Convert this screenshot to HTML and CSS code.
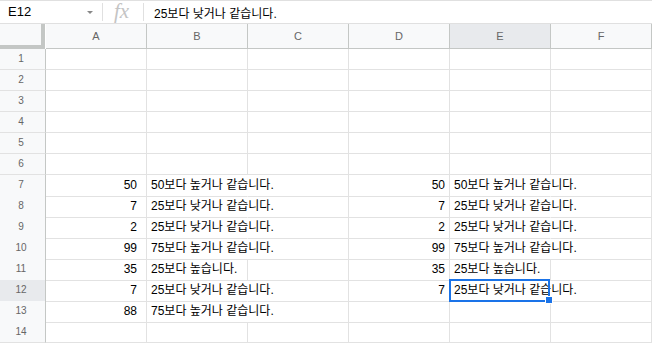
FILE: index.html
```html
<!DOCTYPE html>
<html lang="ko">
<head>
    <meta charset="UTF-8">
    <title>Sheet</title>
    <link rel="stylesheet" href="styles.css">
</head>
<body>

<div class="formula-bar">
    <div class="name-box">E12<span class="caret"></span></div>
    <div class="fx">fx</div>
    <div class="formula">25보다 낮거나 같습니다.</div>
</div>

<div class="sheet">
    <div class="row head-row">
        <div class="corner"></div>
        <div class="col-head">A</div>
        <div class="col-head">B</div>
        <div class="col-head">C</div>
        <div class="col-head">D</div>
        <div class="col-head current">E</div>
        <div class="col-head">F</div>
    </div>

    <div class="row"><div class="row-head">1</div><div class="cell"></div><div class="cell"></div><div class="cell"></div><div class="cell"></div><div class="cell"></div><div class="cell"></div></div>
    <div class="row"><div class="row-head">2</div><div class="cell"></div><div class="cell"></div><div class="cell"></div><div class="cell"></div><div class="cell"></div><div class="cell"></div></div>
    <div class="row"><div class="row-head">3</div><div class="cell"></div><div class="cell"></div><div class="cell"></div><div class="cell"></div><div class="cell"></div><div class="cell"></div></div>
    <div class="row"><div class="row-head">4</div><div class="cell"></div><div class="cell"></div><div class="cell"></div><div class="cell"></div><div class="cell"></div><div class="cell"></div></div>
    <div class="row"><div class="row-head">5</div><div class="cell"></div><div class="cell"></div><div class="cell"></div><div class="cell"></div><div class="cell"></div><div class="cell"></div></div>
    <div class="row"><div class="row-head">6</div><div class="cell"></div><div class="cell"></div><div class="cell"></div><div class="cell"></div><div class="cell"></div><div class="cell"></div></div>

    <div class="row">
        <div class="row-head">7</div>
        <div class="cell num col-a">50</div>
        <div class="cell text spill">50보다 높거나 같습니다.</div>
        <div class="cell"></div>
        <div class="cell num">50</div>
        <div class="cell text spill">50보다 높거나 같습니다.</div>
        <div class="cell"></div>
    </div>
    <div class="row">
        <div class="row-head">8</div>
        <div class="cell num col-a">7</div>
        <div class="cell text spill">25보다 낮거나 같습니다.</div>
        <div class="cell"></div>
        <div class="cell num">7</div>
        <div class="cell text spill">25보다 낮거나 같습니다.</div>
        <div class="cell"></div>
    </div>
    <div class="row">
        <div class="row-head">9</div>
        <div class="cell num col-a">2</div>
        <div class="cell text spill">25보다 낮거나 같습니다.</div>
        <div class="cell"></div>
        <div class="cell num">2</div>
        <div class="cell text spill">25보다 낮거나 같습니다.</div>
        <div class="cell"></div>
    </div>
    <div class="row">
        <div class="row-head">10</div>
        <div class="cell num col-a">99</div>
        <div class="cell text spill">75보다 높거나 같습니다.</div>
        <div class="cell"></div>
        <div class="cell num">99</div>
        <div class="cell text spill">75보다 높거나 같습니다.</div>
        <div class="cell"></div>
    </div>
    <div class="row">
        <div class="row-head">11</div>
        <div class="cell num col-a">35</div>
        <div class="cell text">25보다 높습니다.</div>
        <div class="cell"></div>
        <div class="cell num">35</div>
        <div class="cell text">25보다 높습니다.</div>
        <div class="cell"></div>
    </div>
    <div class="row">
        <div class="row-head current">12</div>
        <div class="cell num col-a">7</div>
        <div class="cell text spill">25보다 낮거나 같습니다.</div>
        <div class="cell"></div>
        <div class="cell num">7</div>
        <div class="cell text spill active">25보다 낮거나 같습니다.</div>
        <div class="cell"></div>
    </div>
    <div class="row">
        <div class="row-head">13</div>
        <div class="cell num col-a">88</div>
        <div class="cell text spill">75보다 높거나 같습니다.</div>
        <div class="cell"></div>
        <div class="cell"></div>
        <div class="cell"></div>
        <div class="cell"></div>
    </div>
    <div class="row"><div class="row-head">14</div><div class="cell"></div><div class="cell"></div><div class="cell"></div><div class="cell"></div><div class="cell"></div><div class="cell"></div></div>
</div>

</body>
</html>
```

FILE: styles.css
```css
body {
    margin: 0;
    font-family: 'Liberation Sans', 'Noto Sans CJK KR', sans-serif;
    background-color: #fff;
    color: #000;
    overflow: hidden;
}

/* Formula bar */
.formula-bar {
    display: flex;
    align-items: center;
    height: 24px;
    box-sizing: border-box;
    border-top: 1px solid #e0e0e0;
    border-bottom: 1px solid #e0e0e0;
}

.name-box {
    position: relative;
    width: 103px;
    box-sizing: border-box;
    padding-left: 8px;
    font-size: 13px;
    border-right: 1px solid #e0e0e0;
    height: 18px;
    line-height: 18px;
}

.caret {
    position: absolute;
    right: 9px;
    top: 8px;
    width: 0;
    height: 0;
    border-left: 3px solid transparent;
    border-right: 3px solid transparent;
    border-top: 3px solid #888;
}

.fx {
    width: 41px;
    box-sizing: border-box;
    padding-left: 11px;
    height: 18px;
    line-height: 16px;
    border-right: 1px solid #e0e0e0;
    font-family: 'Liberation Serif', serif;
    font-style: italic;
    font-size: 21px;
    color: #c4c4c4;
}

.formula {
    padding-left: 10px;
    font-size: 12px;
}

/* Grid */
.row {
    display: grid;
    grid-template-columns: 46px repeat(5, 101px) 1fr;
    height: 21px;
}

.head-row {
    height: 25px;
}

.corner {
    background-color: #f8f9fa;
    border-right: 4px solid #c4c7c5;
    border-bottom: 4px solid #c4c7c5;
    margin-right: 1px;
}

.col-head {
    background-color: #f8f9fa;
    border-right: 1px solid #c4c7c5;
    border-bottom: 1px solid #c4c7c5;
    color: #666;
    font-size: 11px;
    text-align: center;
    line-height: 24px;
}

.row-head {
    background-color: #f8f9fa;
    border-right: 1px solid #c4c7c5;
    border-bottom: 1px solid #e2e2e2;
    color: #666;
    font-size: 10px;
    text-align: center;
    line-height: 20px;
    padding-right: 3px;
}

.current {
    background-color: #e8eaed;
}

.cell {
    border-right: 1px solid #e2e2e2;
    border-bottom: 1px solid #e2e2e2;
    font-size: 12px;
    line-height: 21px;
    white-space: nowrap;
}

.num {
    text-align: right;
    padding-right: 4px;
}

.col-a {
    padding-right: 9px;
}

.text {
    padding-left: 4px;
}

.spill {
    border-right-color: transparent;
}

/* Selected cell */
.active {
    position: relative;
}

.active::before {
    content: '';
    position: absolute;
    left: -1px;
    top: -1px;
    right: 0;
    bottom: -1px;
    border: 2px solid #1a73e8;
}

.active::after {
    content: '';
    position: absolute;
    right: -3px;
    bottom: -3px;
    width: 6px;
    height: 6px;
    background-color: #1a73e8;
    border: 1px solid #fff;
}
```
